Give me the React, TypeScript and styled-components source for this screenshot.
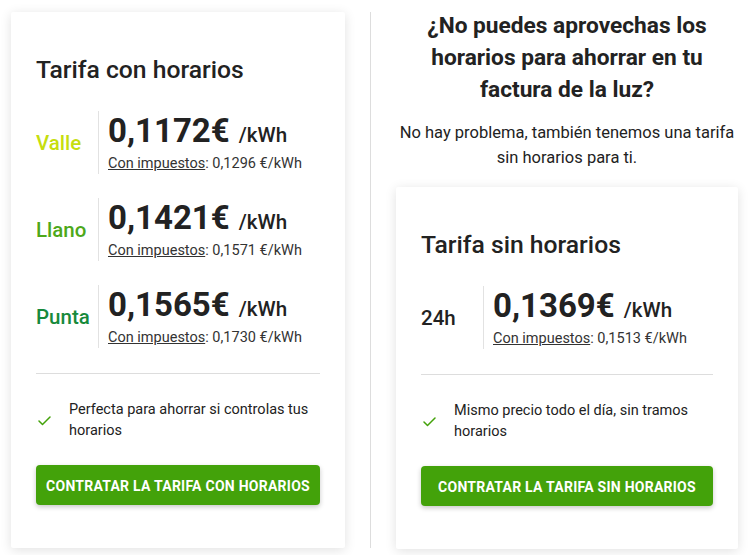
import { createGlobalStyle } from "styled-components";
import styled from "styled-components";

// Price data for each tariff
interface PriceRow {
  label: string;
  color: string;
  price: string;
  taxed: string;
}

const GlobalStyle = createGlobalStyle`
  body {
    margin: 0;
    background: #ffffff;
    font-family: Roboto, "Liberation Sans", Arial, sans-serif;
    color: #222222;
  }
`;

const Page = styled.main`
  display: flex;
  align-items: stretch;
  width: 750px;
  height: 555px;
  padding: 10px 0 7px 11px;
  box-sizing: border-box;
`;

const Card = styled.section`
  background: #ffffff;
  border-radius: 2px;
  box-shadow: 0 2px 12px rgba(0, 0, 0, 0.12);
  padding: 43px 25px 43px;
  box-sizing: border-box;
  display: flex;
  flex-direction: column;
`;

const LeftCard = styled(Card)`
  width: 334px;
  margin-top: 2px;
`;

const Separator = styled.div`
  width: 1px;
  background: #dddddd;
  margin: 2px 25px 0;
`;

const Aside = styled.div`
  width: 342px;
  display: flex;
  flex-direction: column;
`;

const Question = styled.h2`
  margin: 0;
  padding: 0 6px;
  font-size: 22.7px;
  line-height: 32px;
  font-weight: 700;
  text-align: center;
  color: #222222;
`;

const Lead = styled.p`
  margin: 14px 0 17px;
  font-size: 16.5px;
  line-height: 25px;
  text-align: center;
  color: #222222;
`;

const Title = styled.h3`
  margin: 0 0 26px;
  font-size: 24.7px;
  line-height: 30px;
  font-weight: 500;
  color: #222222;
`;

const Rows = styled.div`
  display: flex;
  flex-direction: column;
  gap: 24px;
`;

const Row = styled.div`
  display: flex;
  align-items: center;
  height: 63px;
`;

const Label = styled.span<{ $color: string }>`
  width: 62px;
  flex-shrink: 0;
  font-size: 20.5px;
  font-weight: 500;
  color: ${(p) => p.$color};
`;

const PriceBox = styled.div`
  align-self: stretch;
  border-left: 1px solid #e2e2e2;
  padding-left: 9px;
  display: flex;
  flex-direction: column;
`;

const Price = styled.div`
  font-size: 33px;
  line-height: 40px;
  height: 40px;
  font-weight: 700;
  color: #222222;
  margin-bottom: 3px;
`;

const Unit = styled.span`
  font-size: 20.6px;
  line-height: 1;
  font-weight: 500;
  margin-left: 9px;
`;

const Taxed = styled.div`
  font-size: 14.5px;
  line-height: 20px;
  color: #333333;
`;

const Dotted = styled.span`
  text-decoration: underline;
`;

const Rule = styled.hr`
  border: 0;
  border-top: 1px solid #dddddd;
  margin: 25px 0 25px;
`;

const Feature = styled.div`
  display: flex;
  align-items: center;
  font-size: 14.5px;
  line-height: 21px;
  color: #222222;
`;

const CheckWrap = styled.span`
  width: 33px;
  flex-shrink: 0;
  display: flex;
  padding-left: 2px;
  padding-top: 2px;
  box-sizing: border-box;
`;

const Button = styled.button`
  margin-top: 24px;
  height: 40px;
  padding-top: 2px;
  border: 0;
  border-radius: 4px;
  background: #43a20a;
  color: #ffffff;
  font-family: Roboto, "Liberation Sans", Arial, sans-serif;
  font-size: 14px;
  font-weight: 700;
  letter-spacing: 0.25px;
  text-transform: uppercase;
  box-shadow: 0 2px 5px rgba(0, 0, 0, 0.22);
  cursor: pointer;
`;

const Check = () => (
  <svg width="13" height="10" viewBox="0 0 13 10">
    <polyline
      points="1,5 4.5,8.5 12,1"
      fill="none"
      stroke="#43a20a"
      strokeWidth="1.5"
      strokeLinecap="round"
      strokeLinejoin="round"
    />
  </svg>
);

const timed: PriceRow[] = [
  { label: "Valle", color: "#c6de0e", price: "0,1172€", taxed: "0,1296" },
  { label: "Llano", color: "#4da81a", price: "0,1421€", taxed: "0,1571" },
  { label: "Punta", color: "#178a3c", price: "0,1565€", taxed: "0,1730" },
];

const flat: PriceRow[] = [
  { label: "24h", color: "#222222", price: "0,1369€", taxed: "0,1513" },
];

function TariffCard({
  title,
  rows,
  feature,
  cta,
}: {
  title: string;
  rows: PriceRow[];
  feature: string;
  cta: string;
}) {
  return (
    <>
      <Title>{title}</Title>
      <Rows>
        {rows.map((r) => (
          <Row key={r.label}>
            <Label $color={r.color}>{r.label}</Label>
            <PriceBox>
              <Price>
                {r.price}
                <Unit>/kWh</Unit>
              </Price>
              <Taxed>
                <Dotted>Con impuestos</Dotted>: {r.taxed} €/kWh
              </Taxed>
            </PriceBox>
          </Row>
        ))}
      </Rows>
      <Rule />
      <Feature>
        <CheckWrap>
          <Check />
        </CheckWrap>
        <span>{feature}</span>
      </Feature>
      <Button>{cta}</Button>
    </>
  );
}

export default function App() {
  return (
    <>
      <GlobalStyle />
      <Page>
        <LeftCard>
          <TariffCard
            title="Tarifa con horarios"
            rows={timed}
            feature="Perfecta para ahorrar si controlas tus horarios"
            cta="Contratar la tarifa con horarios"
          />
        </LeftCard>
        <Separator />
        <Aside>
          <Question>
            ¿No puedes aprovechas los
            <br />
            horarios para ahorrar en tu
            <br />
            factura de la luz?
          </Question>
          <Lead>
            No hay problema, también tenemos una tarifa
            <br />
            sin horarios para ti.
          </Lead>
          <Card>
            <TariffCard
              title="Tarifa sin horarios"
              rows={flat}
              feature="Mismo precio todo el día, sin tramos horarios"
              cta="Contratar la tarifa sin horarios"
            />
          </Card>
        </Aside>
      </Page>
    </>
  );
}
